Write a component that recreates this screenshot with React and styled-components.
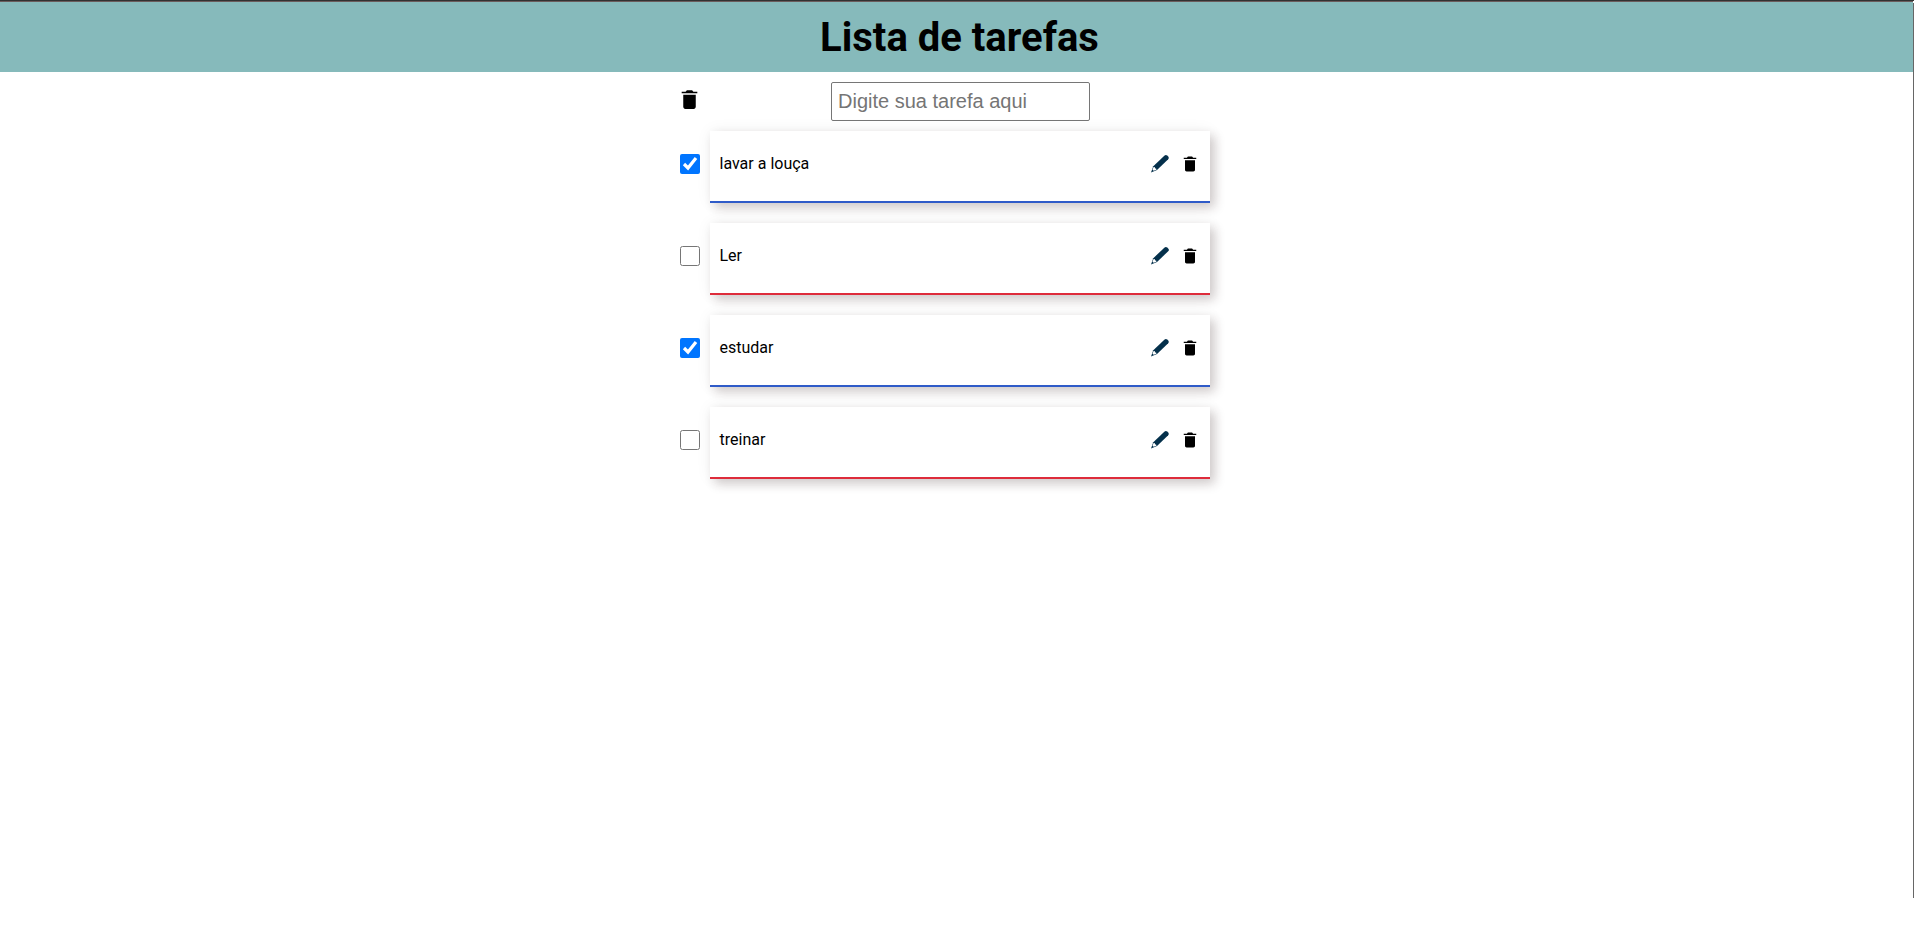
import React, { useState } from "react";
import styled, { createGlobalStyle } from "styled-components";
import { IoMdTrash } from "react-icons/io";

const GlobalStyle = createGlobalStyle`
  * { box-sizing: border-box; margin: 0; padding: 0; }
  body { background: #fff; color: #000; font-family: Roboto, sans-serif; }
`;

const Page = styled.div`
  display: flex;
  align-items: flex-start;
  min-height: 100vh;
  border-top: 1px solid #323232;
`;

const Content = styled.div`
  flex: 1;
`;

const Rail = styled.div`
  width: 1px;
  height: calc(100vh - 51px);
  margin-top: 2px;
  background: #666;
`;

const Header = styled.header`
  display: flex;
  align-items: center;
  justify-content: center;
  height: 71px;
  padding: 2px 0 0 6px;
  border-top: 1px solid #6b5c5c;
  background: #86babb;
`;

const Title = styled.h1`
  font-size: 40px;
  line-height: 48px;
  font-weight: 700;
`;

const Main = styled.main`
  display: flex;
  flex-direction: column;
  align-items: center;
  padding: 10px 0 20px 8px;
`;

const Toolbar = styled.form`
  display: grid;
  grid-template-columns: 1fr auto 1fr;
  align-items: center;
  width: 562px;
`;

const ToolbarActions = styled.div`
  padding-bottom: 4px;
`;

const NewTask = styled.input`
  width: 259px;
  height: 39px;
  padding: 0 6px;
  border: 1px solid #767676;
  border-radius: 2px;
  background: #fff;
  font-family: "Liberation Sans", Arial, sans-serif;
  font-size: 20px;
  &::placeholder { color: #757575; }
`;

const IconButton = styled.button`
  display: flex;
  align-items: center;
  justify-content: center;
  width: 20px;
  border: 0;
  background: none;
  color: ${(p) => p.$color || "#000"};
  cursor: pointer;
  svg { flex-shrink: 0; }
`;

const List = styled.ul`
  display: flex;
  flex-direction: column;
  gap: 20px;
  width: 562px;
  margin-top: 10px;
  list-style: none;
`;

const Row = styled.li`
  display: flex;
  align-items: center;
  gap: 10px;
`;

const Check = styled.input`
  width: 20px;
  height: 20px;
  margin-bottom: 6px;
  accent-color: #0075ff;
`;

const Card = styled.div`
  display: flex;
  align-items: center;
  gap: 10px;
  width: 500px;
  height: 72px;
  padding: 0 10px 4px;
  border-bottom: 2px solid ${(p) => (p.$done ? "#2f5bc8" : "#de2c3b")};
  background: #fff;
  box-shadow: 5px 5px 10px rgba(50, 25, 25, 0.2), 0 0 15px rgba(0, 0, 0, 0.06);
`;

const TaskName = styled.label`
  flex: 1;
  font-size: 16px;
  line-height: 20px;
`;

function PencilIcon() {
  return (
    <svg width="20" height="20" viewBox="0 0 20 20" aria-hidden="true">
      <path
        d="M14.6 1.4 Q15.9 .4 17.3 1.6 L18.4 2.7 Q19.4 4 18.2 5.3 L7 15.9 L1 18.4 L3.3 12.2 Z"
        fill="currentColor"
      />
      <path d="M3.6 12.9 L4.7 13 L5 14.3 L6.3 14.7 L6.4 15.7 L3.7 16.8 L2.5 15.7 Z" fill="#fff" />
    </svg>
  );
}

const initialTasks = [
  { id: 1, name: "lavar a louça", done: true },
  { id: 2, name: "Ler", done: false },
  { id: 3, name: "estudar", done: true },
  { id: 4, name: "treinar", done: false },
];

export default function App() {
  const [tasks, setTasks] = useState(initialTasks);
  const [text, setText] = useState("");

  const toggle = (id) =>
    setTasks(tasks.map((t) => (t.id === id ? { ...t, done: !t.done } : t)));
  const remove = (id) => setTasks(tasks.filter((t) => t.id !== id));
  const edit = (task) => {
    setText(task.name);
    remove(task.id);
  };
  const add = (e) => {
    e.preventDefault();
    if (!text.trim()) return;
    setTasks([...tasks, { id: Date.now(), name: text, done: false }]);
    setText("");
  };

  return (
    <>
      <GlobalStyle />
      <Page>
        <Content>
          <Header>
            <Title>Lista de tarefas</Title>
          </Header>
          <Main>
            <Toolbar onSubmit={add}>
              <ToolbarActions>
                <IconButton
                  type="button"
                  aria-label="Apagar todas"
                  onClick={() => setTasks([])}
                >
                  <IoMdTrash size={25} />
                </IconButton>
              </ToolbarActions>
              <NewTask
                aria-label="Nova tarefa"
                placeholder="Digite sua tarefa aqui"
                value={text}
                onChange={(e) => setText(e.target.value)}
              />
            </Toolbar>
            <List>
              {tasks.map((task) => (
                <Row key={task.id}>
                  <Check
                    type="checkbox"
                    id={`task-${task.id}`}
                    checked={task.done}
                    onChange={() => toggle(task.id)}
                  />
                  <Card $done={task.done}>
                    <TaskName htmlFor={`task-${task.id}`}>{task.name}</TaskName>
                    <IconButton
                      type="button"
                      $color="#04304b"
                      aria-label="Editar"
                      onClick={() => edit(task)}
                    >
                      <PencilIcon />
                    </IconButton>
                    <IconButton
                      type="button"
                      aria-label="Apagar"
                      onClick={() => remove(task.id)}
                    >
                      <IoMdTrash size={20} />
                    </IconButton>
                  </Card>
                </Row>
              ))}
            </List>
          </Main>
        </Content>
        <Rail />
      </Page>
    </>
  );
}
